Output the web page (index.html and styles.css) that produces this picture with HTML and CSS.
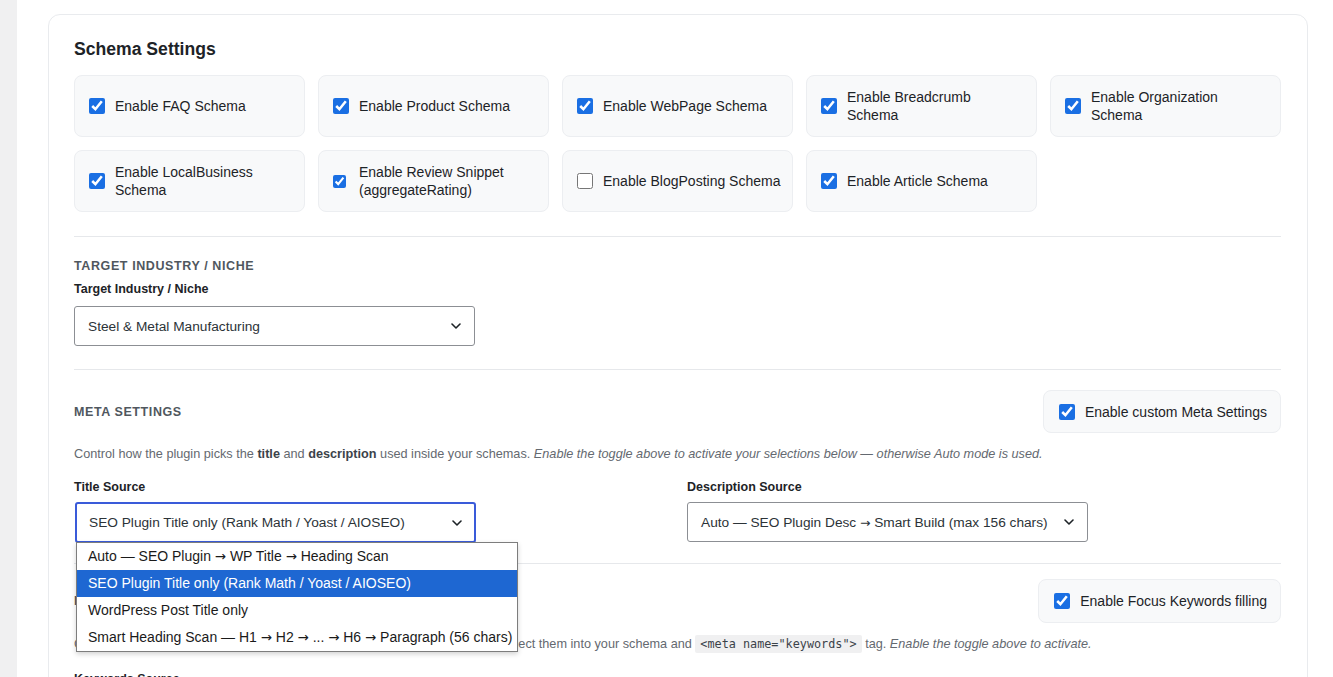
FILE: index.html
```html
<!DOCTYPE html>
<html lang="en">
<head>
<meta charset="utf-8">
<title>Schema Settings</title>
<link rel="stylesheet" href="styles.css">
</head>
<body>
<div class="page">
  <aside class="strip"></aside>
  <main class="wrap">
    <div class="card">
      <h2 class="card-title">Schema Settings</h2>
      <div class="schema-grid">
        <label class="opt"><input type="checkbox" checked><span>Enable FAQ Schema</span></label>
        <label class="opt"><input type="checkbox" checked><span>Enable Product Schema</span></label>
        <label class="opt"><input type="checkbox" checked><span>Enable WebPage Schema</span></label>
        <label class="opt"><input type="checkbox" checked><span>Enable Breadcrumb<br>Schema</span></label>
        <label class="opt"><input type="checkbox" checked><span>Enable Organization<br>Schema</span></label>
        <label class="opt"><input type="checkbox" checked><span>Enable LocalBusiness<br>Schema</span></label>
        <label class="opt"><input class="cb-small" type="checkbox" checked><span>Enable Review Snippet<br>(aggregateRating)</span></label>
        <label class="opt"><input type="checkbox"><span>Enable BlogPosting Schema</span></label>
        <label class="opt"><input type="checkbox" checked><span>Enable Article Schema</span></label>
      </div>

      <section class="section target">
        <h3 class="sec-title">Target Industry / Niche</h3>
        <div class="field-label">Target Industry / Niche</div>
        <div class="select">
          <span>Steel &amp; Metal Manufacturing</span>
          <svg class="chev" width="10" height="6" viewBox="0 0 10 6"><path d="M1 1l4 4 4-4" fill="none" stroke="#1d2327" stroke-width="1.6" stroke-linecap="round" stroke-linejoin="round"/></svg>
        </div>
      </section>

      <section class="section meta">
        <div class="sec-head">
          <h3 class="sec-title">Meta Settings</h3>
          <label class="toggle"><input type="checkbox" checked><span>Enable custom Meta Settings</span></label>
        </div>
        <p class="desc">Control how the plugin picks the <b>title</b> and <b>description</b> used inside your schemas. <em>Enable the toggle above to activate your selections below — otherwise Auto mode is used.</em></p>
        <div class="two-col">
          <div class="field">
            <div class="field-label">Title Source</div>
            <div class="select-wrap">
              <div class="select focus">
                <span>SEO Plugin Title only (Rank Math / Yoast / AIOSEO)</span>
                <svg class="chev" width="10" height="6" viewBox="0 0 10 6"><path d="M1 1l4 4 4-4" fill="none" stroke="#1d2327" stroke-width="1.6" stroke-linecap="round" stroke-linejoin="round"/></svg>
              </div>
              <ul class="popup">
                <li>Auto — SEO Plugin <span class="arr">→</span> WP Title <span class="arr">→</span> Heading Scan</li>
                <li class="sel">SEO Plugin Title only (Rank Math / Yoast / AIOSEO)</li>
                <li>WordPress Post Title only</li>
                <li>Smart Heading Scan — H1 <span class="arr">→</span> H2 <span class="arr">→</span> ... <span class="arr">→</span> H6 <span class="arr">→</span> Paragraph (56 chars)</li>
              </ul>
            </div>
          </div>
          <div class="field">
            <div class="field-label">Description Source</div>
            <div class="select">
              <span>Auto — SEO Plugin Desc <span class="arr">→</span> Smart Build (max 156 chars)</span>
              <svg class="chev" width="10" height="6" viewBox="0 0 10 6"><path d="M1 1l4 4 4-4" fill="none" stroke="#1d2327" stroke-width="1.6" stroke-linecap="round" stroke-linejoin="round"/></svg>
            </div>
          </div>
        </div>
      </section>

      <section class="section keywords">
        <div class="sec-head">
          <h3 class="sec-title">Focus Keywords</h3>
          <label class="toggle"><input type="checkbox" checked><span>Enable Focus Keywords filling</span></label>
        </div>
        <p class="desc">Choose which source the plugin uses to detect your <b>focus keywords</b>, then collect them into your schema and <code>&lt;meta name="keywords"&gt;</code> tag. <em>Enable the toggle above to activate.</em></p>
        <div class="field-label kw-label">Keywords Source</div>
      </section>
    </div>
  </main>
</div>
</body>
</html>
```
FILE: styles.css
```css
html, body {
  margin: 0;
  padding: 0;
}
body {
  font-family: "Liberation Sans", Arial, sans-serif;
  color: #1d2327;
  background: #ffffff;
  overflow: hidden;
}
.page {
  display: flex;
  min-height: 677px;
}
.strip {
  width: 17px;
  flex: none;
  background: #f0f0f1;
}
.wrap {
  flex: 1;
  padding: 14px 0 0 31px;
}
.card {
  width: 1260px;
  box-sizing: border-box;
  border: 1px solid #e9ebee;
  border-radius: 12px;
  padding: 22px 26px 40px 25px;
  background: #fff;
}
.card-title {
  margin: 0 0 14px;
  font-size: 17.6px;
  line-height: 24px;
  font-weight: 700;
  color: #1d2327;
}
.schema-grid {
  display: grid;
  grid-template-columns: repeat(5, 231px);
  gap: 13px;
}
.opt {
  display: flex;
  align-items: center;
  gap: 10px;
  box-sizing: border-box;
  min-height: 61px;
  padding: 12px 14px;
  background: #f8f9fa;
  border: 1px solid #eceef1;
  border-radius: 8px;
  font-size: 14px;
  line-height: 18px;
  color: #1d2327;
  white-space: nowrap;
}
input[type="checkbox"] {
  width: 16px;
  height: 16px;
  margin: 0;
  flex: none;
  accent-color: #1a6fe3;
}
input.cb-small {
  width: 13px;
  height: 13px;
  margin: 0 3px 0 0;
}
.section {
  border-top: 1px solid #e6e8eb;
}
.target {
  margin-top: 24px;
  padding: 21px 0 23px;
}
.sec-title {
  margin: 0;
  font-size: 12.5px;
  line-height: 16px;
  font-weight: 700;
  letter-spacing: 0.6px;
  text-transform: uppercase;
  color: #50575e;
}
.field-label {
  margin-top: 7px;
  font-size: 12.5px;
  line-height: 16px;
  font-weight: 700;
  color: #1d2327;
}
.select {
  margin-top: 9px;
  width: 401px;
  height: 40px;
  box-sizing: border-box;
  border: 1px solid #8c8f94;
  border-radius: 3px;
  display: flex;
  align-items: center;
  justify-content: space-between;
  padding: 0 13px 0 13px;
  font-size: 13.7px;
  color: #2c3338;
  background: #fff;
  white-space: nowrap;
}
.arr {
  font-family: "DejaVu Sans", sans-serif;
  font-size: 0.9em;
}
.meta {
  padding: 20px 0 20px;
}
.sec-head {
  display: flex;
  align-items: center;
  justify-content: space-between;
}
.toggle {
  display: flex;
  align-items: center;
  gap: 10px;
  padding: 12px 13px 12px 15px;
  background: #f8f9fa;
  border: 1px solid #eceef1;
  border-radius: 8px;
  font-size: 14px;
  line-height: 18px;
  color: #1d2327;
  white-space: nowrap;
}
.meta .toggle {
  padding: 11.5px 13px 11.5px 15px;
}
.desc {
  margin: 12px 0 0;
  font-size: 12.7px;
  line-height: 18px;
  color: #646970;
  white-space: nowrap;
}
.desc b {
  color: #3c434a;
  font-weight: 700;
}
.desc code {
  font-family: "DejaVu Sans Mono", "Liberation Mono", monospace;
  font-size: 11.8px;
  background: #f0f0f1;
  color: #3c434a;
  padding: 2px 5px;
  border-radius: 2px;
}
.two-col {
  display: grid;
  grid-template-columns: 594px 594px;
  column-gap: 19px;
  margin-top: 16px;
}
.two-col .field-label {
  margin-top: 0;
}
.two-col .select {
  margin-top: 7px;
}
.select-wrap {
  position: relative;
}
.select.focus {
  border: 2px solid #3a5bd9;
  height: 41px;
  margin-left: 1px;
  padding-left: 12px;
  padding-right: 12px;
}
.popup {
  position: absolute;
  top: 40px;
  left: 2px;
  width: 442px;
  box-sizing: border-box;
  margin: 0;
  padding: 0;
  list-style: none;
  background: #fff;
  border: 1px solid #7d7d7d;
  box-shadow: 0 2px 5px rgba(0, 0, 0, 0.18);
  z-index: 10;
}
.popup li {
  height: 27px;
  line-height: 27px;
  padding-left: 11px;
  font-size: 14px;
  color: #1a1a1a;
  white-space: nowrap;
}
.popup li .arr {
  font-size: 0.95em;
}
.popup li.sel {
  background: #1e67d2;
  color: #fff;
}
.keywords {
  padding: 15px 0 20px;
}
.kw-label {
  margin-top: 18px;
}
```
